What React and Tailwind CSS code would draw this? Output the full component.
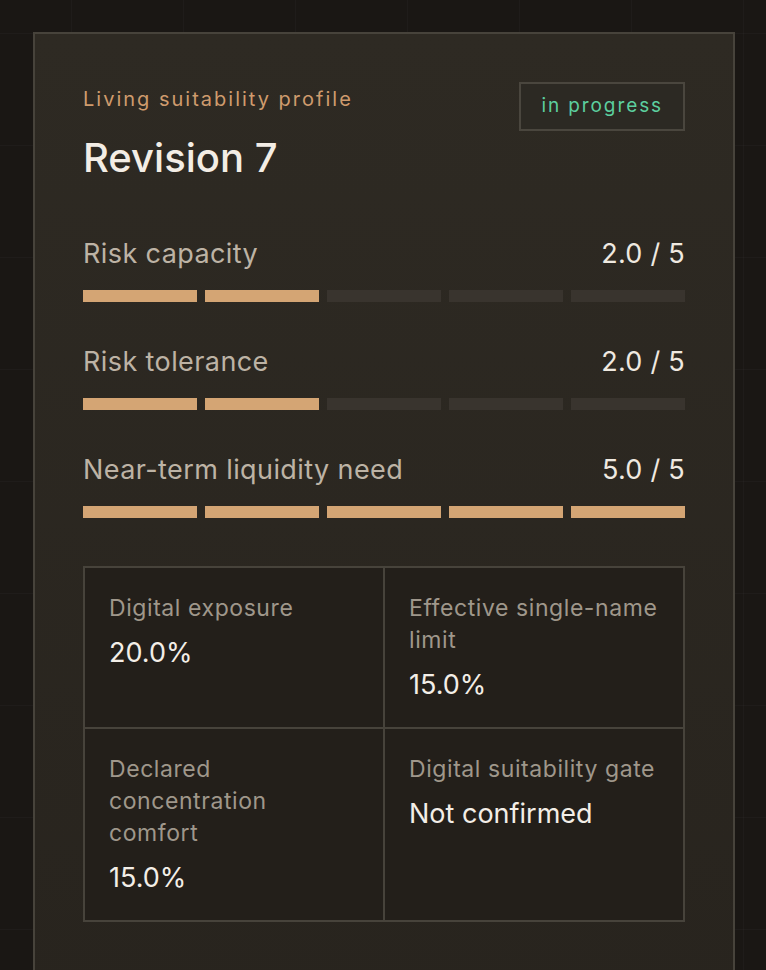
import React from "react";

const scores = [
  { label: "Risk capacity", value: 2 },
  { label: "Risk tolerance", value: 2 },
  { label: "Near-term liquidity need", value: 5 },
];

const facts = [
  { label: "Digital exposure", value: "20.0%" },
  { label: "Effective single-name limit", value: "15.0%" },
  { label: "Declared concentration comfort", value: "15.0%" },
  { label: "Digital suitability gate", value: "Not confirmed" },
];

function ScoreRow({ label, value }) {
  return (
    <div>
      <div className="flex items-center justify-between leading-[36px]">
        <span className="text-[27px] tracking-[0.015em] text-[#bdb3a5]">{label}</span>
        <span className="text-[27px] tracking-[0.01em] text-[#efe9e0]">{value.toFixed(1)} / 5</span>
      </div>
      <div className="mt-[18px] flex gap-[8px]">
        {[1, 2, 3, 4, 5].map((n) => (
          <div
            key={n}
            className={n <= value ? "h-[12px] flex-1 bg-[#d4a574]" : "h-[12px] flex-1 bg-[#39342e]"}
          />
        ))}
      </div>
    </div>
  );
}

function FactCell({ label, value }) {
  return (
    <div className="bg-[#231f1a] px-[24px] pt-[24px] pb-[24px]">
      <div className="text-[23px] leading-[32px] tracking-[0.025em] text-[#9f978b]">{label}</div>
      <div className="mt-[11px] text-[27px] leading-[36px] text-[#f3eee7]">{value}</div>
    </div>
  );
}

export default function App() {
  return (
    <div
      className="min-h-[970px] overflow-hidden bg-[#1a1714] bg-[linear-gradient(to_bottom,rgba(255,255,255,0.025)_1px,transparent_1px),linear-gradient(to_right,rgba(255,255,255,0.025)_1px,transparent_1px)] bg-[size:112px_112px] bg-[position:71px_33px] pt-[32px] pl-[33px]"
      style={{ fontFamily: "Inter, 'Noto Sans', sans-serif" }}
    >
      <div className="w-[702px] border-2 border-[#47433b] bg-linear-to-b from-[#2e2a23] to-[#28241e] px-[48px] pt-[48px] pb-[80px]">
        <div className="flex items-start justify-between">
          <div className="pt-[3px]">
            <div className="text-[20px] leading-[28px] tracking-[0.1em] text-[#cf9b6d]">
              Living suitability profile
            </div>
            <h1 className="mt-[22px] text-[40px] leading-[46px] font-medium text-[#f3ede5]">Revision 7</h1>
          </div>
          <div className="flex h-[49px] items-center border-2 border-[#4a463e] bg-[#2c2923] px-[20px] text-[19px] tracking-[0.1em] text-[#5ccf9f]">
            in progress
          </div>
        </div>

        <div className="mt-[55px] flex flex-col gap-[42px]">
          {scores.map((s) => (
            <ScoreRow key={s.label} label={s.label} value={s.value} />
          ))}
        </div>

        <div className="mt-[48px] grid grid-cols-2 gap-[2px] bg-[#47433b] p-[2px]">
          {facts.map((f) => (
            <FactCell key={f.label} label={f.label} value={f.value} />
          ))}
        </div>
      </div>
    </div>
  );
}
